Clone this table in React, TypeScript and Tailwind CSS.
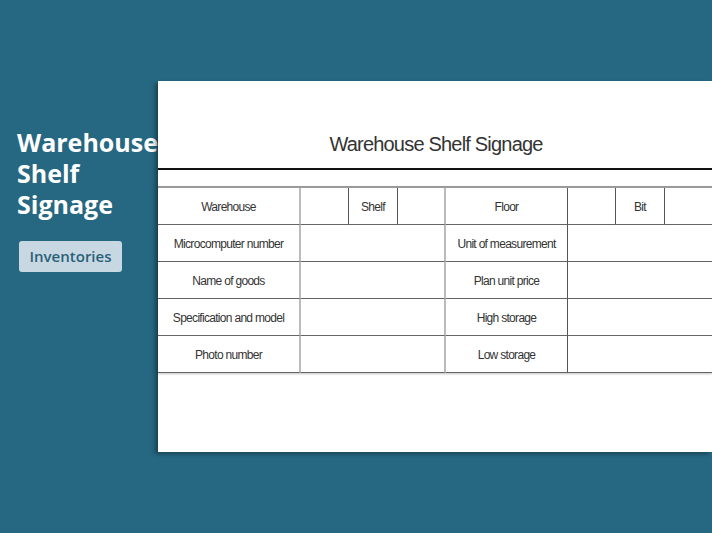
import React from 'react'

function Cell({ text = '', span = '', line = 'border-[#555]' }: { text?: string; span?: string; line?: string }) {
    return (
        <div className={`flex items-center justify-center pt-[1px] text-[12px] tracking-[-0.7px] text-[#333] border-b border-b-[#666] border-r ${line} ${span}`}>
            {text}
        </div>
    )
}

export default function App() {
    const rows = [
        ['Microcomputer number', 'Unit of measurement'],
        ['Name of goods', 'Plan unit price'],
        ['Specification and model', 'High storage'],
        ['Photo number', 'Low storage'],
    ]
    return (
        <div className="flex h-[533px] w-full overflow-hidden bg-[#266882]" style={{ fontFamily: '"Liberation Sans", Arial, sans-serif' }}>
            <div className="w-[158px] shrink-0 pl-[17px] pt-[127px]">
                <h1 className="text-[25px] font-bold leading-[31px] text-white" style={{ fontFamily: '"Open Sans", sans-serif' }}>
                    Warehouse<br />Shelf<br />Signage
                </h1>
                <div className="mt-[21px] ml-[2px] flex h-[31px] w-[103px] items-center justify-center rounded-[3px] bg-[#c8d8e2] text-[15px] font-semibold text-[#2a5f79]" style={{ fontFamily: '"Open Sans", sans-serif' }}>
                    Inventories
                </div>
            </div>

            <div className="mt-[81px] h-[371px] flex-1 bg-white shadow-[-3px_2px_4px_rgba(0,0,0,0.35)]">
                <div className="flex h-[87px] items-end justify-center pb-[12px] pl-[2px]">
                    <span className="text-[20px] leading-[24px] tracking-[-0.8px] text-[#333]">Warehouse Shelf Signage</span>
                </div>
                <div className="h-[2px] bg-[#111]" />
                <div className="h-[16px]" />
                <div className="grid grid-cols-[143px_48px_49px_48px_122px_48px_49px_47px] grid-rows-[37px_37px_37px_37px_37px] border-t-2 border-[#9a9a9a] shadow-[0_1px_2px_rgba(0,0,0,0.25)]">
                    <Cell text="Warehouse" line="border-r-2 border-r-[#bbb]" />
                    <Cell />
                    <Cell text="Shelf" />
                    <Cell line="border-r-2 border-r-[#bbb]" />
                    <Cell text="Floor" />
                    <Cell />
                    <Cell text="Bit" />
                    <Cell line="border-r-0" />
                    {rows.map(([a, b]) => (
                        <React.Fragment key={a}>
                            <Cell text={a} line="border-r-2 border-r-[#bbb]" />
                            <Cell span="col-span-3" line="border-r-2 border-r-[#bbb]" />
                            <Cell text={b} />
                            <Cell span="col-span-3" line="border-r-0" />
                        </React.Fragment>
                    ))}
                </div>
            </div>
        </div>
    )
}
